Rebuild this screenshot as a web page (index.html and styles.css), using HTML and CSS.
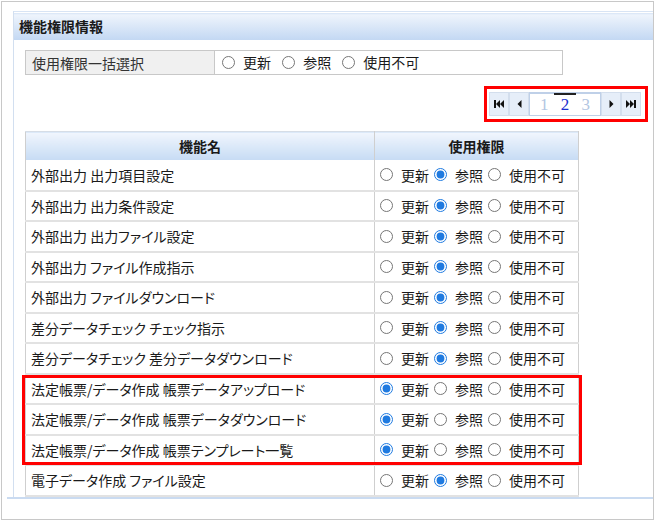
FILE: index.html
```html
<!DOCTYPE html>
<html lang="ja">
<head>
    <meta charset="UTF-8">
    <title>機能権限情報</title>
    <link rel="stylesheet" href="styles.css">
</head>
<body>
    <div class="frame">
        <div class="panel">
            <div class="panel-title">機能権限情報</div>
            <div class="panel-body">
                <table class="bulk">
                    <tr>
                        <th>使用権限一括選択</th>
                        <td>
                            <label class="opt"><input type="radio" name="bulk">更新</label>
                            <label class="opt"><input type="radio" name="bulk">参照</label>
                            <label class="opt"><input type="radio" name="bulk">使用不可</label>
                        </td>
                    </tr>
                </table>

                <div class="pager-row">
                    <div class="pager">
                        <button class="pg-btn" title="最初">
                            <svg width="10" height="8" viewBox="0 0 10 8"><rect x="0" y="0" width="2" height="8"/><path d="M6 0V8L2 4Z"/><path d="M10 0V8L6 4Z"/></svg>
                        </button>
                        <button class="pg-btn" title="前へ">
                            <svg width="5" height="8" viewBox="0 0 5 8"><path d="M4.5 0V8L0.5 4Z"/></svg>
                        </button>
                        <div class="pg-nums">
                            <span class="pg-num">1</span>
                            <span class="pg-num current">2</span>
                            <span class="pg-num">3</span>
                        </div>
                        <button class="pg-btn" title="次へ">
                            <svg width="5" height="8" viewBox="0 0 5 8"><path d="M0.5 0V8L4.5 4Z"/></svg>
                        </button>
                        <button class="pg-btn" title="最後">
                            <svg width="10" height="8" viewBox="0 0 10 8"><path d="M0 0V8L4 4Z"/><path d="M4 0V8L8 4Z"/><rect x="8" y="0" width="2" height="8"/></svg>
                        </button>
                    </div>
                </div>

                <div class="grid-wrap">
                    <table class="grid">
                        <thead>
                            <tr><th class="col-name">機能名</th><th class="col-auth">使用権限</th></tr>
                        </thead>
                        <tbody id="rows"></tbody>
                    </table>
                    <div class="mark"></div>
                </div>
            </div>
        </div>
        <div class="panel-foot"></div>
    </div>
    <script>
        const rows = [
            ['外部出力 出力項目設定', 1],
            ['外部出力 出力条件設定', 1],
            ['外部出力 出力ファイル設定', 1],
            ['外部出力 ファイル作成指示', 1],
            ['外部出力 ファイルダウンロード', 1],
            ['差分データチェック チェック指示', 1],
            ['差分データチェック 差分データダウンロード', 1],
            ['法定帳票/データ作成 帳票データアップロード', 0],
            ['法定帳票/データ作成 帳票データダウンロード', 0],
            ['法定帳票/データ作成 帳票テンプレート一覧', 0],
            ['電子データ作成 ファイル設定', 1]
        ];
        const labels = ['更新', '参照', '使用不可'];
        const body = document.getElementById('rows');

        rows.forEach(([name, sel], i) => {
            const tr = document.createElement('tr');
            const opts = labels.map((text, j) =>
                `<label class="opt"><input type="radio" name="r${i}"${j === sel ? ' checked' : ''}>${text}</label>`
            ).join('');
            tr.innerHTML = `<td class="col-name">${name}</td><td class="col-auth">${opts}</td>`;
            body.appendChild(tr);
        });
    </script>
</body>
</html>
```

FILE: styles.css
```css
body {
    margin: 0;
    padding: 0;
    background-color: #fff;
    color: #1a1a1a;
    font-family: "Noto Sans CJK JP", "Noto Sans", sans-serif;
    font-size: 14px;
    font-feature-settings: "palt";
}
.frame {
    margin: 1px;
    width: 651px;
    height: 517px;
    border: 1px solid #c8c8c8;
    overflow: hidden;
}
.panel {
    margin: 9px 0 0 11px;
    border-left: 1px solid #d2dff0;
}
.panel-title {
    height: 28px;
    line-height: 28px;
    padding-left: 5px;
    border-top: 1px solid #d8e4f4;
    background: linear-gradient(to bottom, #fff 0, #fff 1px, #d6e4f6 1px, #eef4fc 3px, #c3d8f3 100%);
    font-weight: bold;
    color: #1a1a1a;
}
.panel-body {
    height: 447px;
    padding: 10px 0 0 11px;
    overflow: hidden;
}
.panel-foot {
    margin-left: 5px;
    height: 2px;
    background-color: #cadbf1;
}

/* bulk select */
.bulk {
    width: 538px;
    border-collapse: collapse;
}
.bulk th,
.bulk td {
    height: 23px;
    padding: 0;
    border: 1px solid #c8c8c8;
    font-weight: normal;
    text-align: left;
}
.bulk th {
    width: 182px;
    padding-left: 6px;
    background-color: #f0f0f0;
    color: #333;
}
.bulk td {
    padding-left: 7px;
}
.bulk .opt {
    margin-right: 8px;
}

.opt {
    display: inline-flex;
    align-items: center;
    white-space: nowrap;
}
.opt input {
    width: 13px;
    height: 13px;
    margin: 0 8px 0 0;
    accent-color: #1f7ae0;
}

/* pager */
.pager-row {
    display: flex;
    justify-content: flex-end;
    margin: 11px 5px 0 0;
}
.pager {
    display: flex;
    padding: 3px 4px 3px 2px;
    border: 3px solid #f00;
}
.pg-btn {
    display: flex;
    align-items: center;
    justify-content: center;
    width: 20px;
    height: 24px;
    padding: 0;
    border: 1px solid #d3deed;
    background-color: #e6eef9;
    cursor: pointer;
}
.pg-btn svg {
    fill: #111;
}
.pg-nums {
    display: flex;
    align-items: center;
    justify-content: space-around;
    width: 72px;
    height: 24px;
    box-sizing: border-box;
    padding: 0 4px;
    border: 1px solid #bfd0e8;
    border-top-width: 2px;
    background-color: #fff;
    font-family: "Liberation Serif", serif;
    font-size: 17px;
}
.pg-num {
    position: relative;
    color: #b3c6e2;
    padding: 0 4px;
}
.pg-num.current {
    color: #1a2fd0;
}
.pg-num.current::before {
    content: '';
    position: absolute;
    left: -3px;
    right: -3px;
    top: -2px;
    height: 2px;
    background-color: #222;
}

/* permission grid */
.grid-wrap {
    position: relative;
    margin-top: 9px;
    width: 554px;
}
.grid {
    width: 554px;
    border-collapse: collapse;
}
.grid th,
.grid td {
    padding: 0;
    border-left: 1px solid #cfcfcf;
    border-right: 1px solid #cfcfcf;
}
.grid th {
    height: 28px;
    background: linear-gradient(to bottom, #f1f6fd, #c6dbf4);
    border-top: 1px solid #d6dde6;
    font-weight: bold;
    text-align: center;
    color: #1a1a1a;
}
.grid tbody tr {
    height: 30.5px;
}
.grid td {
    border-bottom: 2px solid #e2e2e2;
    white-space: nowrap;
}
.grid .col-name {
    width: 343px;
    padding-left: 5px;
}
.grid td.col-auth {
    padding-left: 5px;
}
.grid th.col-name {
    padding-left: 0;
}
.grid .col-auth .opt {
    margin-right: 5px;
}

/* highlighted rows */
.mark {
    position: absolute;
    left: -3px;
    top: 244px;
    width: 560px;
    height: 90px;
    box-sizing: border-box;
    border: 3px solid #f00;
}
```
